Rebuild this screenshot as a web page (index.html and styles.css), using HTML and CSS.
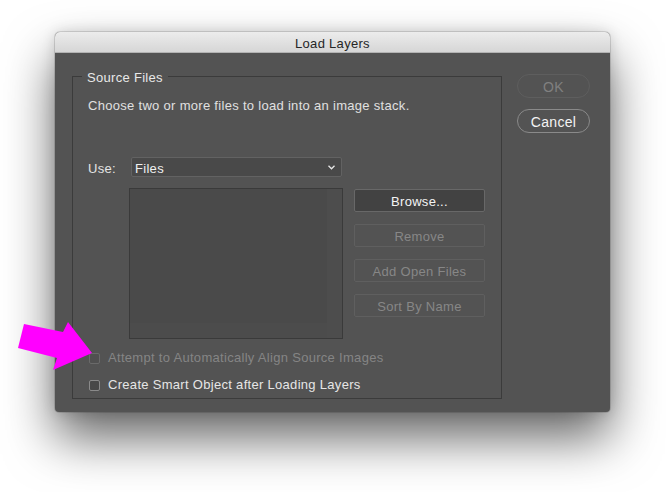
FILE: index.html
```html
<!DOCTYPE html>
<html lang="en">
<head>
<meta charset="utf-8">
<title>Load Layers</title>
<link rel="stylesheet" href="styles.css">
</head>
<body>
<div class="window">
  <div class="titlebar">Load Layers</div>
  <div class="content">
    <fieldset class="group">
      <legend>Source Files</legend>
      <p class="desc">Choose two or more files to load into an image stack.</p>
      <div class="use-row">
        <span class="use-label">Use:</span>
        <div class="select">
          <span>Files</span>
          <svg class="chev" width="7" height="5" viewBox="0 0 7 5"><path d="M0.5 0.8 L3.5 3.8 L6.5 0.8" fill="none" stroke="#e8e8e8" stroke-width="1.3"/></svg>
        </div>
      </div>
      <div class="files-row">
        <div class="list">
          <div class="list-main">
            <div class="list-area"></div>
            <div class="hscroll"></div>
          </div>
          <div class="vscroll"></div>
        </div>
        <div class="file-buttons">
          <button class="btn primary">Browse...</button>
          <button class="btn disabled">Remove</button>
          <button class="btn disabled">Add Open Files</button>
          <button class="btn disabled">Sort By Name</button>
        </div>
      </div>
      <div class="check disabled"><span class="box"></span>Attempt to Automatically Align Source Images</div>
      <div class="check"><span class="box"></span>Create Smart Object after Loading Layers</div>
    </fieldset>
    <div class="dialog-buttons">
      <button class="pill disabled">OK</button>
      <button class="pill">Cancel</button>
    </div>
  </div>
</div>
<svg class="arrow" width="80" height="54" viewBox="0 0 80 54">
  <polygon points="8,4 47,12 52,2 76,33 37,50 41,38 2,28" fill="#ff00ff"/>
</svg>
</body>
</html>
```

FILE: styles.css
```css
html, body {
  margin: 0;
  height: 100%;
}
body {
  background: #ffffff;
  padding: 32px 0 0 55px;
  box-sizing: border-box;
  overflow: hidden;
  font-family: "Liberation Sans", Arial, sans-serif;
  font-size: 13px;
  line-height: 16px;
  letter-spacing: 0.3px;
}
.window {
  width: 555px;
  height: 380px;
  border-radius: 5px 5px 4px 4px;
  overflow: hidden;
  background: #535353;
  box-shadow: 0 0 0 1px rgba(0,0,0,0.12), 0 0 14px rgba(0,0,0,0.15), 0 26px 50px rgba(0,0,0,0.6);
  display: flex;
  flex-direction: column;
}
.titlebar {
  height: 20px;
  line-height: 23px;
  text-align: center;
  color: #262626;
  background: linear-gradient(#ececec, #d6d6d6);
  border-bottom: 1px solid #b3b3b3;
  flex: none;
}
.content {
  flex: 1;
  display: grid;
  grid-template-columns: 430px 73px;
  column-gap: 15px;
  padding: 13px 20px 13px 17px;
}
.group {
  margin: 0;
  padding: 12px 15px 0 15px;
  border: 1px solid #3b3b3b;
  min-width: 0;
  color: #e4e4e4;
}
.group legend {
  margin-left: -6px;
  padding: 4px 5px 0;
  line-height: 16px;
  color: #e8e8e8;
}
.desc {
  margin: 0;
  color: #e0e0e0;
}
.use-row {
  margin-top: 43px;
  display: flex;
  align-items: center;
  height: 20px;
}
.use-label {
  width: 43px;
  flex: none;
  padding-top: 3px;
}
.select {
  width: 211px;
  height: 20px;
  box-sizing: border-box;
  border: 1px solid #626262;
  border-radius: 2px;
  background: #494949;
  display: flex;
  align-items: center;
  justify-content: space-between;
  padding: 3px 6px 0 3px;
  color: #f0f0f0;
}
.chev {
  display: block;
  margin-top: -3px;
}
.files-row {
  margin-top: 11px;
  padding-left: 41px;
  display: flex;
  gap: 11px;
}
.list {
  width: 214px;
  height: 151px;
  box-sizing: border-box;
  border: 1px solid #3a3a3a;
  background: #4a4a4a;
  display: flex;
}
.list-main {
  flex: 1;
  display: flex;
  flex-direction: column;
}
.list-area {
  flex: 1;
}
.hscroll {
  height: 15px;
  background: #4c4c4c;
}
.vscroll {
  width: 15px;
  background: #4d4d4d;
}
.file-buttons {
  width: 131px;
  padding-top: 1px;
  display: flex;
  flex-direction: column;
  gap: 12px;
}
.btn {
  height: 23px;
  margin: 0;
  padding: 2px 0 0;
  font: inherit;
  letter-spacing: inherit;
  line-height: 19px;
  border-radius: 2px;
  border: 1px solid #5f5f5f;
  background: #535353;
  color: #878787;
}
.btn.primary {
  background: #424242;
  border-color: #686868;
  color: #f4f4f4;
}
.check {
  display: flex;
  align-items: center;
  margin-top: 11px;
  height: 16px;
  color: #e6e6e6;
}
.check.disabled {
  color: #858585;
}
.box {
  width: 11px;
  height: 11px;
  box-sizing: border-box;
  margin: 0 8px 0 1px;
  border: 1px solid #8a8a8a;
  border-radius: 2px;
  background: #484848;
  flex: none;
}
.check.disabled .box {
  border-color: #6a6a6a;
  background: #505050;
}
.dialog-buttons {
  padding-top: 8px;
  display: flex;
  flex-direction: column;
  gap: 11px;
}
.pill {
  height: 24px;
  margin: 0;
  padding: 2px 0 0;
  font: inherit;
  font-size: 14px;
  letter-spacing: inherit;
  border-radius: 12px;
  border: 1px solid #8a8a8a;
  background: #535353;
  color: #f4f4f4;
}
.pill.disabled {
  border-color: #5e5e5e;
  color: #808080;
}
.arrow {
  position: absolute;
  left: 16px;
  top: 320px;
}
```
